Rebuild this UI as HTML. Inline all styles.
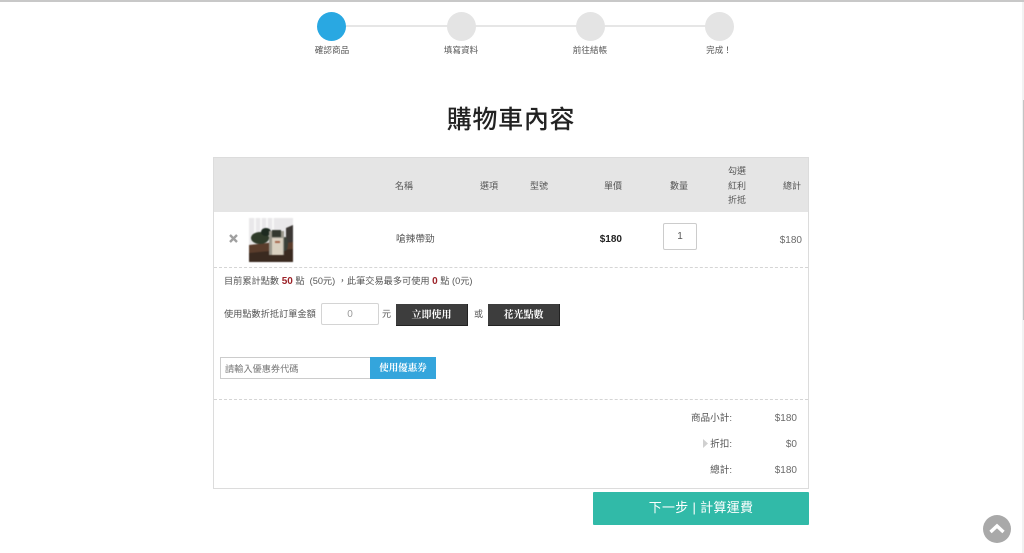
<!DOCTYPE html>
<html lang="zh-Hant"><head><meta charset="utf-8"><title>購物車內容</title>
<style>
html,body{margin:0;padding:0;width:1024px;height:553px;overflow:hidden;background:#fff}
body{font-family:"Liberation Sans","Noto Sans CJK TC",sans-serif;color:#555;font-size:9px;position:relative}
.a{position:absolute;white-space:nowrap;line-height:12px}
.c{text-align:center}
.r{text-align:right}
.dot{position:absolute;top:12px;width:29px;height:29px;border-radius:50%;background:#e4e4e4}
.b{position:absolute;box-sizing:border-box}
.btn{position:absolute;top:304px;height:22px;background:#3d3d3d;color:#fff;font-family:"Liberation Serif","Noto Serif CJK SC",serif;font-weight:700;font-size:10px;line-height:23px;text-align:center;border-bottom:1px solid #222;border-right:1px solid #222;box-sizing:border-box}
.v{font-size:10px;color:#6a6a6a}
</style></head><body>
<div class="b" style="left:0;top:0;width:1024px;height:2px;background:#c8c8c8"></div>
<div class="b" style="left:1022px;top:2px;width:2px;height:551px;background:#f2f2f2"></div>
<div class="b" style="left:1023px;top:100px;width:1px;height:220px;background:#c4c4c4"></div>

<div class="b" style="left:340px;top:25px;width:375px;height:2px;background:#e6e6e6"></div>
<div class="dot" style="left:317px;background:#29a8e2"></div>
<div class="dot" style="left:447px"></div>
<div class="dot" style="left:576px"></div>
<div class="dot" style="left:705px"></div>
<div class="a c" style="left:302px;top:44px;width:60px;font-size:8.6px">確認商品</div>
<div class="a c" style="left:431px;top:44px;width:60px;font-size:8.6px">填寫資料</div>
<div class="a c" style="left:560px;top:44px;width:60px;font-size:8.6px">前往結帳</div>
<div class="a c" style="left:689px;top:44px;width:60px;font-size:8.6px">完成！</div>

<div class="a c" style="left:213px;top:104px;width:596px;font-size:25px;line-height:32px;color:#222;letter-spacing:.7px;font-weight:500">購物車內容</div>

<div class="b" style="left:213px;top:157px;width:596px;height:332px;border:1px solid #dcdcdc"></div>
<div class="b" style="left:214px;top:158px;width:594px;height:54px;background:#e5e5e5"></div>
<div class="a" style="left:395px;top:180px">名稱</div>
<div class="a" style="left:480px;top:180px">選項</div>
<div class="a" style="left:530px;top:180px">型號</div>
<div class="a" style="left:604px;top:180px">單價</div>
<div class="a" style="left:670px;top:180px">數量</div>
<div class="a" style="left:728px;top:165px">勾選</div>
<div class="a" style="left:728px;top:180px">紅利</div>
<div class="a" style="left:728px;top:194px">折抵</div>
<div class="a" style="left:783px;top:180px">總計</div>

<svg class="b" style="left:228px;top:233px" width="11" height="11" viewBox="0 0 11 11"><path d="M2 2L9 9M9 2L2 9" stroke="#a0a0a0" stroke-width="2.4"/></svg>
<svg class="b" style="left:249px;top:218px;filter:blur(.4px)" width="44" height="44" viewBox="0 0 44 44">
<rect width="44" height="44" fill="#e9e8ea"/>
<path d="M6 0V20M12 0V16M18 0V14M24 0V12" stroke="#f8f8f8" stroke-width="2"/>
<path d="M0 27L44 22V44H0Z" fill="#5a3d2c"/>
<path d="M0 35L44 31V44H0Z" fill="#3a2a20"/>
<path d="M37 10L44 7V24L37 25Z" fill="#3c3835"/>
<ellipse cx="11" cy="20" rx="9" ry="6" fill="#2f3b2a"/>
<ellipse cx="17" cy="14" rx="5" ry="4" fill="#1d2a20"/>
<ellipse cx="36" cy="26" rx="3" ry="7" fill="#3a4038"/>
<rect x="20" y="13" width="15" height="24" fill="#9a978c"/>
<rect x="23" y="12" width="9" height="7" fill="#33382f"/>
<rect x="23" y="20" width="11" height="17" fill="#d9d0c0"/>
<rect x="26" y="23" width="5" height="2" fill="#a86a50"/>
</svg>
<div class="a" style="left:396px;top:234px;font-size:9.7px">嗆辣帶勁</div>
<div class="a r" style="left:572px;top:234px;width:50px;font-weight:700;font-size:10px;color:#222">$180</div>
<div class="b" style="left:663px;top:223px;width:34px;height:27px;border:1px solid #ccc;border-radius:2px;text-align:center;font-size:10px;line-height:26px">1</div>
<div class="a r" style="left:752px;top:234px;width:50px"><span class="v">$180</span></div>
<div class="b" style="left:214px;top:267px;width:594px;border-top:1px dashed #d5d5d5"></div>

<div class="a" style="left:224px;top:275px;font-size:9.2px">目前累計點數 <b style="color:#9c2228;font-size:10px">50</b> 點&nbsp; (50元) ，此筆交易最多可使用 <b style="color:#9c2228;font-size:10px">0</b> 點 (0元)</div>
<div class="a" style="left:224px;top:308px;font-size:9.2px">使用點數折抵訂單金額</div>
<div class="b" style="left:321px;top:303px;width:58px;height:22px;border:1px solid #d4d4d4;border-radius:2px;text-align:center;line-height:21px;color:#999;font-size:10px">0</div>
<div class="a" style="left:382px;top:308px">元</div>
<div class="btn" style="left:396px;width:72px">立即使用</div>
<div class="a" style="left:474px;top:308px">或</div>
<div class="btn" style="left:488px;width:72px">花光點數</div>

<div class="b" style="left:220px;top:357px;width:151px;height:22px;border:1px solid #ccc;border-right:0;line-height:23px;padding-left:4px;font-size:9.2px;color:#777">請輸入優惠券代碼</div>
<div class="b" style="left:370px;top:357px;width:66px;height:22px;background:#34a5dc;color:#fff;font-family:'Liberation Serif','Noto Serif CJK SC',serif;font-weight:700;font-size:9.5px;line-height:24px;text-align:center">使用優惠券</div>
<div class="b" style="left:214px;top:399px;width:594px;border-top:1px dashed #d5d5d5"></div>

<div class="a r" style="left:652px;top:413px;width:80px;font-size:9.6px">商品小計:</div>
<div class="a r" style="left:747px;top:412px;width:50px"><span class="v">$180</span></div>
<svg class="b" style="left:703px;top:439px" width="5" height="9"><path d="M0 0L5 4.5L0 9Z" fill="#d0d0d0"/></svg>
<div class="a r" style="left:652px;top:439px;width:80px;font-size:9.6px">折扣:</div>
<div class="a r" style="left:747px;top:438px;width:50px"><span class="v">$0</span></div>
<div class="a r" style="left:652px;top:465px;width:80px;font-size:9.6px">總計:</div>
<div class="a r" style="left:747px;top:464px;width:50px"><span class="v">$180</span></div>

<div class="b" style="left:593px;top:492px;width:216px;height:33px;background:#31baa8;border-radius:1px;color:#fff;font-size:13px;line-height:32px;text-align:center;letter-spacing:.3px">下一步 | 計算運費</div>

<svg class="b" style="left:983px;top:515px" width="28" height="28" viewBox="0 0 28 28"><circle cx="14" cy="14" r="14" fill="#a9a9a9"/><path d="M7.5 17L14 11L20.5 17" fill="none" stroke="#fff" stroke-width="3.4"/></svg>
</body></html>
